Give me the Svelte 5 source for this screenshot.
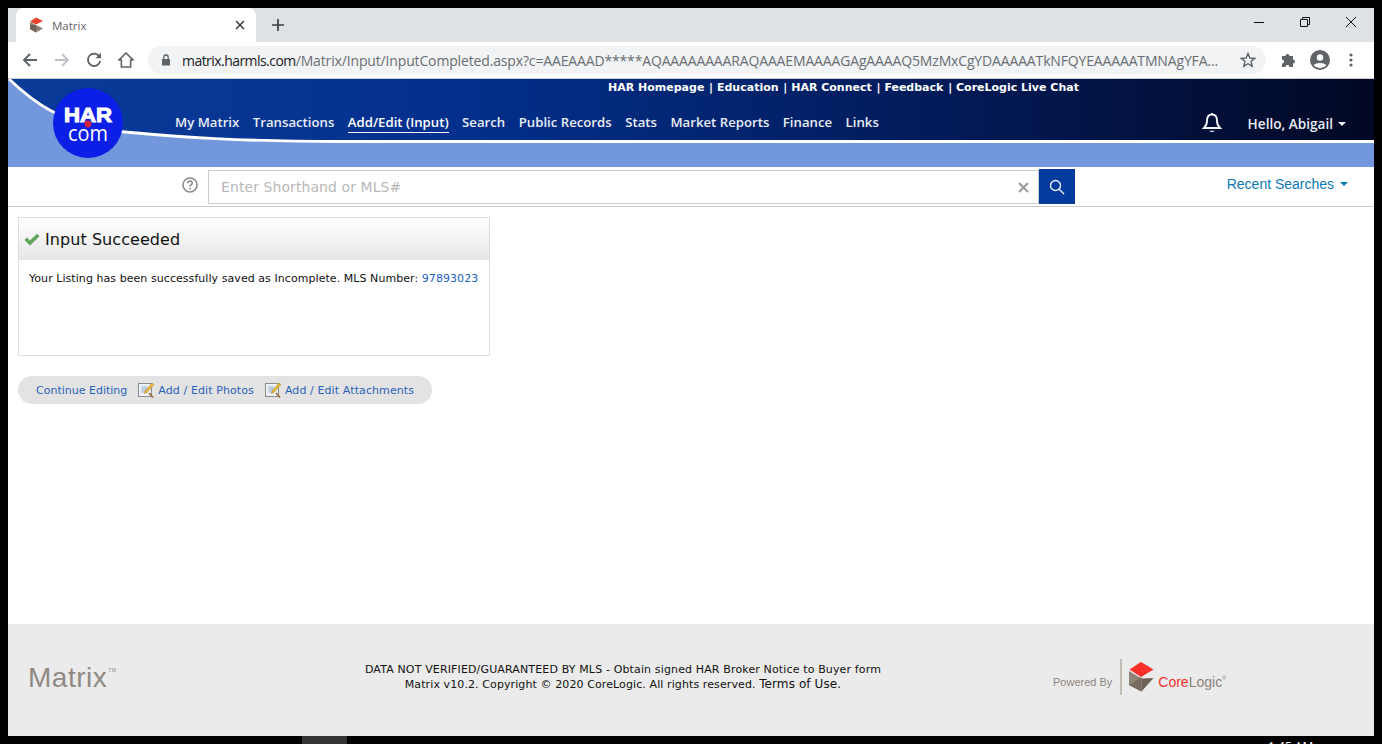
<script>
  const mainNav = ["My Matrix", "Transactions", "Add/Edit (Input)", "Search", "Public Records", "Stats", "Market Reports", "Finance", "Links"];
  const topLinks = ["HAR Homepage", "Education", "HAR Connect", "Feedback", "CoreLogic Live Chat"];
  const actions = ["Add / Edit Photos", "Add / Edit Attachments"];
  const url = "AQAAAAAAAARAQAAAEMAAAAGAgAAAAQ5MzMxCgYDAAAAATkNFQYEAAAAATMNAgYFA...";
</script>

<div class="window">
  <div class="tabstrip">
    <div class="tab">
      <svg class="favicon" width="14" height="16" viewBox="0 0 14 16">
        <path d="M7 0.5 14 4 7 7.5 1 4.5Z" fill="#e8432e" />
        <path d="M1 5 7 8 14 11.5 7 15.5 1 12Z" fill="#8d8073" />
        <path d="M1 8 7 8 7 15.5 1 12Z" fill="#6f6357" />
      </svg>
      <span class="tab-title">Matrix</span>
      <svg class="tab-close" width="10" height="10" viewBox="0 0 10 10"><path d="M1 1 9 9M9 1 1 9" stroke="#3c4043" stroke-width="1.6" /></svg>
    </div>
    <svg class="new-tab" width="14" height="14" viewBox="0 0 14 14"><path d="M7 1V13M1 7H13" stroke="#3c4043" stroke-width="1.7" /></svg>
    <div class="win-controls">
      <svg width="12" height="12" viewBox="0 0 12 12"><path d="M1 6.5H11" stroke="#111" stroke-width="1" /></svg>
      <svg width="12" height="12" viewBox="0 0 12 12" fill="none" stroke="#111"><path d="M1.5 3.5H8.5V10.5H1.5ZM3.5 3.5V1.5H10.5V8.5H8.5" /></svg>
      <svg width="12" height="12" viewBox="0 0 12 12"><path d="M1 1 11 11M11 1 1 11" stroke="#111" stroke-width="1" /></svg>
    </div>
  </div>

  <div class="toolbar">
    <svg class="tool" width="16" height="16" viewBox="0 0 16 16" fill="none" stroke="#5f6368" stroke-width="1.9"><path d="M15 8H2M8 2 2 8 8 14" /></svg>
    <svg class="tool" width="16" height="16" viewBox="0 0 16 16" fill="none" stroke="#bdc1c6" stroke-width="1.9"><path d="M1 8H14M8 2 14 8 8 14" /></svg>
    <svg class="tool" width="16" height="16" viewBox="0 0 16 16" fill="none"><path d="M13.2 4.2A6.2 6.2 0 1 0 14.2 9" stroke="#5f6368" stroke-width="1.8" /><path d="M9.5 6.3H15V0.8Z" fill="#5f6368" /></svg>
    <svg class="tool" width="16" height="16" viewBox="0 0 16 16" fill="none" stroke="#5f6368" stroke-width="1.6"><path d="M8 1 1 8H3.4V15H12.6V8H15Z" /></svg>
    <div class="omnibox">
      <svg width="10" height="12" viewBox="0 0 10 12"><path d="M1 5H9V11.5H1Z" fill="#5f6368" /><path d="M2.8 5V3.2A2.2 2.2 0 0 1 7.2 3.2V5" fill="none" stroke="#5f6368" stroke-width="1.3" /></svg>
      <span class="url"><span class="host">matrix.harmls.com</span>/Matrix/Input/InputCompleted.aspx?c=AAEAAAD*****{url}</span>
      <svg class="star" width="16" height="16" viewBox="0 0 16 16"><path d="M8 1.6 9.9 6 14.7 6.4 11 9.5 12.2 14.2 8 11.7 3.8 14.2 5 9.5 1.3 6.4 6.1 6Z" fill="none" stroke="#5f6368" stroke-width="1.4" /></svg>
    </div>
    <svg class="ext" width="16" height="16" viewBox="0 0 16 16"><path d="M1 4H4.5A2 2 0 0 1 8.5 4H12V7.5A2 2 0 0 1 12 11.5V15H8.5A2 2 0 0 0 4.5 15H1V11.5A2 2 0 0 0 1 7.5Z" fill="#5f6368" /></svg>
    <svg class="avatar" width="20" height="20" viewBox="0 0 20 20"><circle cx="10" cy="10" r="10" fill="#5f6368" /><circle cx="10" cy="7.5" r="3.2" fill="#fff" /><path d="M3.8 15.2C5.5 12.4 14.5 12.4 16.2 15.2 13 18.8 7 18.8 3.8 15.2Z" fill="#fff" /></svg>
    <svg class="dots" width="4" height="14" viewBox="0 0 4 14"><circle cx="2" cy="2" r="1.6" fill="#5f6368" /><circle cx="2" cy="7" r="1.6" fill="#5f6368" /><circle cx="2" cy="12" r="1.6" fill="#5f6368" /></svg>
  </div>

  <header class="har-header">
    <svg class="curve" width="1366" height="88" viewBox="0 0 1366 88" preserveAspectRatio="none">
      <defs>
        <linearGradient id="navy" x1="0" x2="1" y1="0" y2="0">
          <stop offset="0" stop-color="#0a3b99" />
          <stop offset="0.33" stop-color="#03308c" />
          <stop offset="0.66" stop-color="#021c5c" />
          <stop offset="1" stop-color="#020824" />
        </linearGradient>
      </defs>
      <rect width="1366" height="88" fill="url(#navy)" />
      <path d="M0 0C22 21 52 46 117 53C172 58 232 62.5 332 62.5H1366V88H0Z" fill="#7297dc" />
      <path d="M1 0C23 21 52 46 117 53C172 58 232 62.5 332 62.5H1366" fill="none" stroke="#fff" stroke-width="2.8" />
    </svg>

    <svg class="har-logo" width="72" height="72" viewBox="0 0 72 72">
      <circle cx="36" cy="36" r="35" fill="#0b1fe6" />
      <text class="har" x="36" y="35" text-anchor="middle" textLength="48" lengthAdjust="spacingAndGlyphs">HAR</text>
      <text class="com" x="36" y="54" text-anchor="middle" textLength="40" lengthAdjust="spacingAndGlyphs">com</text>
      <circle cx="36" cy="37" r="3.400" fill="#d5223f" />
    </svg>

    <div class="top-links">
      {#each topLinks as link, i}
        {#if i > 0}<span class="sep">|</span>{/if}
        <a href="#top">{link}</a>
      {/each}
    </div>

    <nav class="main-nav">
      {#each mainNav as item}
        <a href="#top" class:current={item === "Add/Edit (Input)"}>{item}</a>
      {/each}
      <div class="user">
        <svg width="20" height="22" viewBox="0 0 20 22" fill="none" stroke="#eef1f6" stroke-width="1.9"><path d="M10 2.500C5.800 2.500 5 5.800 5 9C5 12.500 3.800 14.300 2 16H18C16.200 14.300 15 12.500 15 9C15 5.800 14.200 2.500 10 2.500Z" /><path d="M10 1V3" /><path d="M7.500 18.800C8.500 20.500 11.500 20.500 12.500 18.800Z" fill="#eef1f6" stroke="none" /></svg>
        <span class="hello">Hello, Abigail</span>
        <span class="caret white"></span>
      </div>
    </nav>
  </header>

  <div class="search-row">
    <svg class="help" width="16" height="16" viewBox="0 0 16 16" fill="none" stroke="#8a8a8a" stroke-width="1.6"><circle cx="8" cy="8" r="7" /><path d="M5.700 6.200C5.800 3.500 10.300 3.500 10.300 6C10.300 7.600 8 7.600 8 9.600" /><path d="M8 10.800V12.500" /></svg>
    <div class="search-input">
      <span class="placeholder">Enter Shorthand or MLS#</span>
      <svg width="11" height="11" viewBox="0 0 11 11"><path d="M1 1 10 10M10 1 1 10" stroke="#999" stroke-width="2" /></svg>
    </div>
    <button class="search-btn" aria-label="Search">
      <svg width="16" height="16" viewBox="0 0 16 16" fill="none" stroke="#e8eefb" stroke-width="1.400"><circle cx="6.500" cy="6.500" r="5" /><path d="M10.200 10.200 15 15" /></svg>
    </button>
    <div class="recent">Recent Searches <span class="caret blue"></span></div>
  </div>

  <main class="content">
    <section class="panel">
      <div class="panel-head">
        <svg width="16" height="13" viewBox="0 0 16 13"><path d="M0.500 7 3 4.500 6 7.500 13 0.800 15.500 3.300 6 12.500Z" fill="#5fa55a" /></svg>
        <h2>Input Succeeded</h2>
      </div>
      <p>Your Listing has been successfully saved as Incomplete. MLS Number: <a href="#top">97893023</a></p>
    </section>

    <div class="action-bar">
      <a class="first" href="#top">Continue Editing</a>
      {#each actions as action}
        <a class="action" href="#top">
          <svg width="17" height="18" viewBox="0 0 17 18">
            <rect x="0.500" y="2.500" width="13" height="13" fill="#eef2f6" stroke="#8c8c8c" />
            <path d="M3 6H9M3 8.500H7M3 11H6" stroke="#9db7d6" stroke-width="1.200" />
            <circle cx="7" cy="9" r="3" fill="#b9cde2" />
            <path d="M7 10 14 2 16 3.500 9 11.500 6.500 12.500Z" fill="#e8b93d" stroke="#a8802a" stroke-width="0.500" />
            <path d="M11 12 15 16.500" stroke="#a2683a" stroke-width="1.800" />
          </svg>
          {action}
        </a>
      {/each}
    </div>
  </main>

  <footer class="site-footer">
    <div class="matrix-mark">Matrix<sup>TM</sup></div>
    <div class="legal">
      <div>DATA NOT VERIFIED/GUARANTEED BY MLS - Obtain signed HAR Broker Notice to Buyer form</div>
      <div class="copy">Matrix v10.2. Copyright © 2020 CoreLogic. All rights reserved. <a href="#top">Terms of Use.</a></div>
    </div>
    <div class="powered">
      <span class="by">Powered By</span>
      <span class="rule"></span>
      <svg width="25" height="30" viewBox="0 0 25 30">
        <path d="M12 0 24.500 7.500 12 15 0.500 7.500Z" fill="#f9302a" />
        <path d="M0 9 12.500 16.500V29.500L0 23Z" fill="#8f8377" />
        <path d="M12.500 16.500 24.500 16 12.500 29.500Z" fill="#6d6257" />
        <path d="M0 23 12.500 15 12.500 29.500Z" fill="#766b60" />
      </svg>
      <span class="cl"><b>Core</b>Logic<sup>®</sup></span>
    </div>
  </footer>
</div>

<div class="taskbar">
  <span class="task-app"></span>
  <span class="clock">1:45 AM</span>
</div>

<style>
  :global(body) {
    background: #000;
    overflow: hidden;
  }

  .window {
    margin: 8px 8px 0;
    height: 728px;
    background: #fff;
    display: flex;
    flex-direction: column;
    font-family: "DejaVu Sans", Verdana, sans-serif;
  }

  .tabstrip {
    height: 34px;
    flex: none;
    background: #dee1e6;
    display: flex;
    align-items: flex-end;
    padding-left: 8px;
  }

  .tab {
    width: 240px;
    height: 34px;
    background: #fff;
    border-radius: 8px 8px 0 0;
    display: flex;
    align-items: center;
    padding: 0 11px 0 13px;
    box-sizing: border-box;
  }

  .tab-title {
    margin-left: 9px;
    font: 11.500px "Open Sans", sans-serif;
    color: #5f6368;
    flex: 1;
  }

  .new-tab {
    margin: 0 0 10px 15px;
  }

  .win-controls {
    margin-left: auto;
    align-self: flex-start;
    height: 28px;
    display: flex;
    align-items: center;
    gap: 34px;
    padding-right: 17px;
  }

  .toolbar {
    height: 36px;
    flex: none;
    display: flex;
    align-items: center;
    border-bottom: 1px solid #ccc;
    padding-left: 14px;
    box-sizing: content-box;
  }

  .tool {
    margin-right: 16px;
  }

  .omnibox {
    width: 1118px;
    height: 28px;
    margin-left: -2px;
    background: #f1f3f4;
    border-radius: 14px;
    display: flex;
    align-items: center;
    padding: 0 10px 0 13px;
    box-sizing: border-box;
    font: 14px "Open Sans", sans-serif;
    color: #6a6e73;
  }

  .url {
    margin-left: 11px;
    flex: 1;
    white-space: nowrap;
    overflow: hidden;
    letter-spacing: -0.15px;
  }

  .host {
    color: #202124;
    letter-spacing: -0.55px;
  }

  .star {
    margin-left: 14px;
  }

  .ext {
    margin-left: 15px;
  }

  .avatar {
    margin-left: 13px;
  }

  .dots {
    margin-left: 19px;
  }

  .har-header {
    height: 88px;
    flex: none;
    position: relative;
    color: #fff;
  }

  .curve {
    position: absolute;
    left: 0;
    top: 0;
  }

  .har-logo {
    position: absolute;
    left: 44px;
    top: 8px;
  }

  .har {
    font: 900 21px "Liberation Sans", sans-serif;
    stroke: #fff;
    stroke-width: 1.1px;
    fill: #fff;
  }

  .com {
    font: 400 21px "Open Sans", sans-serif;
    fill: #fff;
  }

  .top-links {
    position: relative;
    height: 16px;
    padding: 1px 0 0 600px;
    font: bold 11px "DejaVu Sans", sans-serif;
    line-height: 16px;
    white-space: nowrap;
    margin-bottom: -1px;
  }

  .top-links a {
    color: #fff;
    text-decoration: none;
  }

  .sep {
    margin-left: 4.750px;
  }

  .main-nav {
    position: relative;
    display: flex;
    align-items: center;
    gap: 13.500px;
    padding: 13px 28px 0 167px;
    height: 30px;
    font: 600 13.200px "Open Sans", sans-serif;
  }

  .main-nav a {
    color: #e8edf5;
    text-decoration: none;
    white-space: nowrap;
    padding-bottom: 1px;
    border-bottom: 2px solid transparent;
  }

  .main-nav a.current {
    color: #fff;
    border-bottom: 1px solid #fff;
  }

  .user {
    margin-left: auto;
    display: flex;
    align-items: center;
    color: #e8edf5;
  }

  .hello {
    margin-left: 26px;
    font-size: 13.600px;
  }

  .caret {
    display: inline-block;
    width: 0;
    height: 0;
    border-left: 4px solid transparent;
    border-right: 4px solid transparent;
    border-top: 4px solid;
    margin-left: 5px;
    vertical-align: middle;
  }

  .caret.white {
    color: #e8edf5;
    margin-top: 2px;
  }

  .caret.blue {
    color: #0b79b8;
    margin-top: -2px;
    margin-left: 2px;
  }

  .search-row {
    height: 38px;
    margin-top: 1px;
    flex: none;
    border-bottom: 1px solid #ccc;
    display: flex;
    align-items: flex-start;
    padding-left: 173px;
    box-sizing: content-box;
  }

  .help {
    margin: 9px 10px 0 1px;
  }

  .search-input {
    width: 831px;
    height: 34px;
    margin-top: 2px;
    border: 1px solid #ccc;
    box-sizing: border-box;
    display: flex;
    align-items: center;
    justify-content: space-between;
    padding: 0 9px 0 12px;
  }

  .placeholder {
    font: 14px "DejaVu Sans", sans-serif;
    letter-spacing: 0.08px;
    color: #b8b8b8;
  }

  .search-btn {
    width: 36px;
    height: 35px;
    margin-top: 1px;
    border: 0;
    padding: 0;
    background: #023a9e;
    display: flex;
    align-items: center;
    justify-content: center;
  }

  .recent {
    margin: 8px 0 0 auto;
    padding-right: 26px;
    font: 14px "Liberation Sans", sans-serif;
    color: #0b79b8;
  }

  .content {
    flex: 1;
    padding: 10px 10px 0;
  }

  .panel {
    width: 472px;
    height: 139px;
    border: 1px solid #ddd;
    box-sizing: border-box;
  }

  .panel-head {
    height: 42px;
    display: flex;
    align-items: center;
    gap: 5px;
    padding-left: 5px;
    background: linear-gradient(#fff, #e6e6e6);
  }

  .panel-head h2 {
    margin: 0;
    font-size: 16px;
    font-weight: 400;
    letter-spacing: 0.06px;
    color: #111;
  }

  .panel p {
    margin: 12px 0 0 10px;
    font-size: 11px;
    letter-spacing: 0.06px;
    line-height: 14px;
    color: #111;
    white-space: nowrap;
  }

  .panel a {
    color: #1a62c5;
    text-decoration: none;
  }

  .action-bar {
    width: 414px;
    height: 28px;
    margin-top: 20px;
    background: #e3e3e3;
    border-radius: 14px;
    display: flex;
    align-items: center;
    font-size: 11px;
    white-space: nowrap;
  }

  .action-bar a {
    color: #2a62b8;
    text-decoration: none;
    display: flex;
    align-items: center;
    gap: 3px;
  }

  .first {
    margin-left: 18px;
  }

  .action {
    margin-left: 11px;
    letter-spacing: 0.1px;
  }

  .site-footer {
    height: 112px;
    flex: none;
    background: #ebebeb;
    display: grid;
    grid-template-columns: 347px 536px 1fr;
    align-items: center;
  }

  .matrix-mark {
    padding-left: 20px;
    margin-bottom: 5px;
    font: 28px "Liberation Sans", sans-serif;
    letter-spacing: 0.5px;
    color: #8f8a84;
  }

  .matrix-mark sup {
    font-size: 5px;
    vertical-align: 15px;
    margin-left: 1px;
  }

  .legal {
    font-size: 11px;
    letter-spacing: 0.14px;
    line-height: 15px;
    text-align: center;
    color: #111;
    margin-bottom: 6px;
  }

  .copy {
    letter-spacing: 0.1px;
  }

  .legal a {
    font-size: 12px;
    color: #111;
    text-decoration: none;
  }

  .powered {
    display: flex;
    align-items: center;
    padding-left: 162px;
    margin-bottom: 7px;
  }

  .by {
    font: 11px "Liberation Sans", sans-serif;
    color: #8d857d;
    margin-top: 10px;
  }

  .rule {
    width: 2px;
    height: 36px;
    background: #c4bdb6;
    margin: 0 7px 0 8px;
  }

  .cl {
    margin: 10px 0 0 4px;
    font: 14px "Liberation Sans", sans-serif;
    color: #8a817a;
  }

  .cl b {
    font-weight: 400;
    color: #f9302a;
  }

  .cl sup {
    font-size: 5px;
    vertical-align: 7px;
  }

  .taskbar {
    height: 8px;
    position: relative;
    overflow: hidden;
  }

  .task-app {
    position: absolute;
    left: 302px;
    top: 0;
    width: 45px;
    height: 8px;
    background: #333;
  }

  .clock {
    position: absolute;
    left: 1268px;
    top: 2px;
    font: 12px "Open Sans", sans-serif;
    color: #fff;
  }
</style>
